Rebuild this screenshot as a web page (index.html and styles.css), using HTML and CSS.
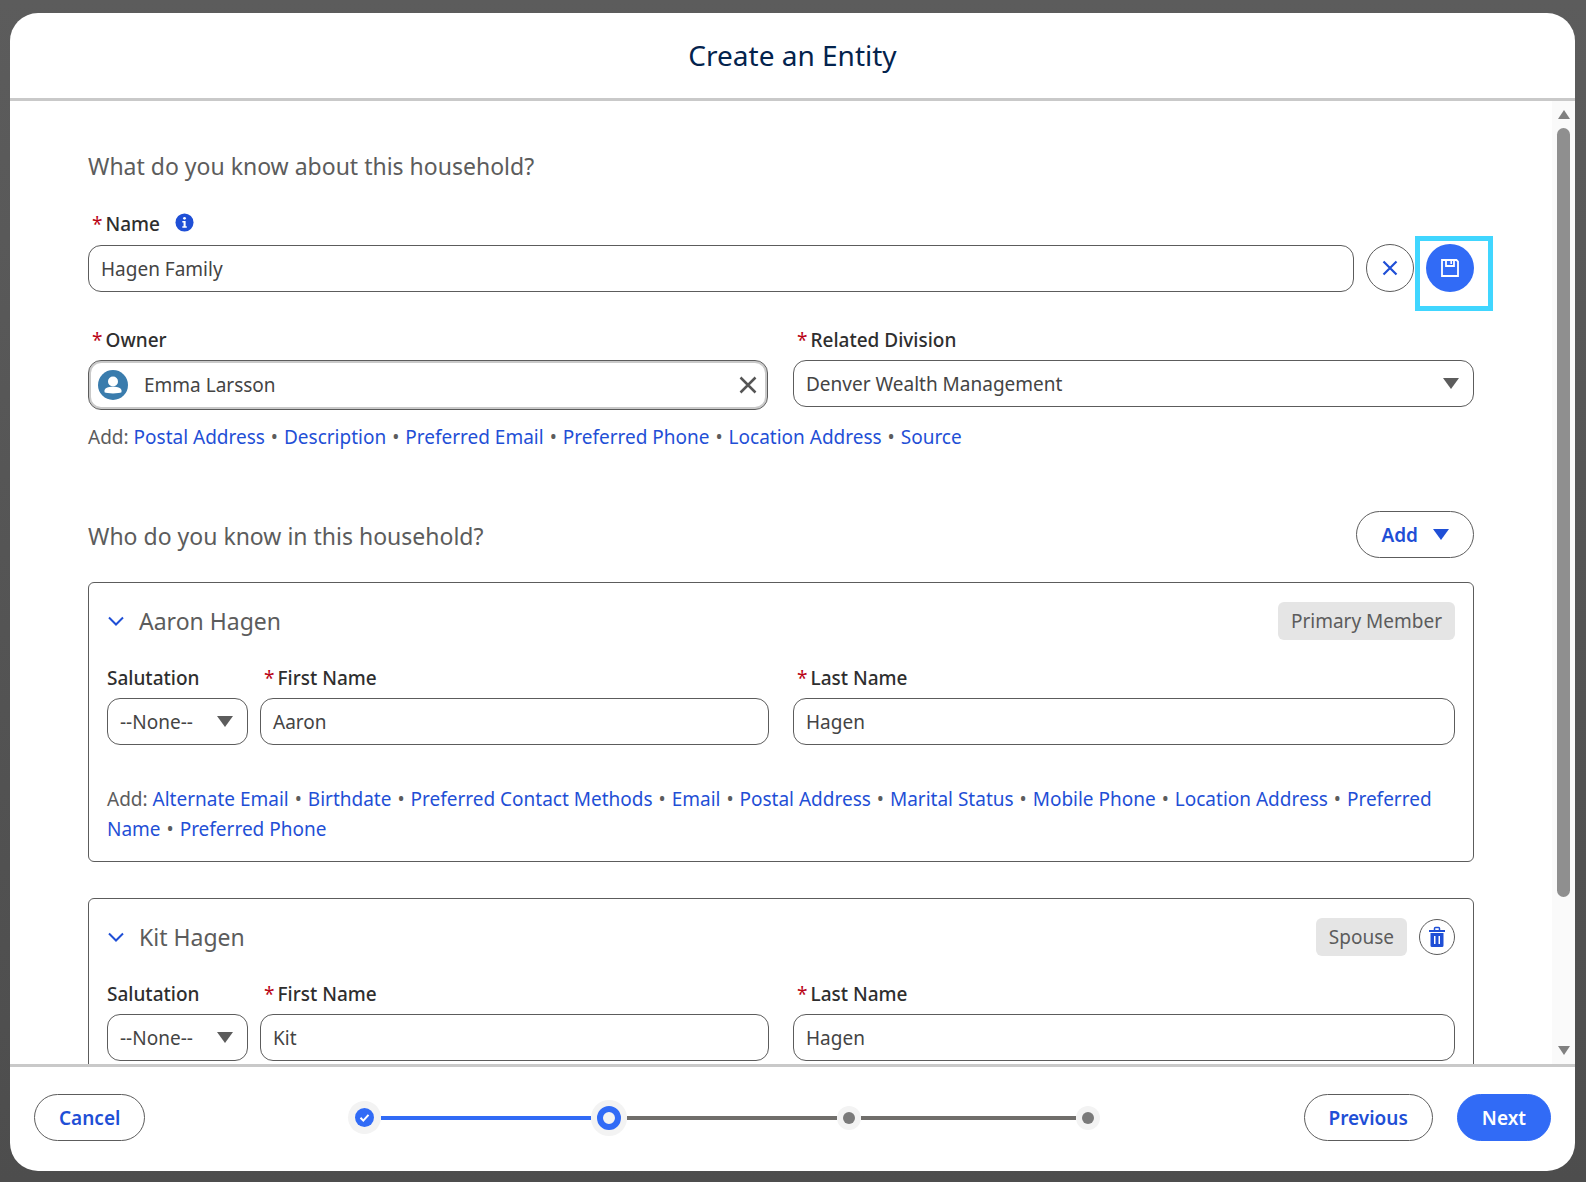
FILE: index.html
```html
<!DOCTYPE html>
<html lang="en">
<head>
  <meta charset="UTF-8" />
  <meta name="viewport" content="width=device-width, initial-scale=1" />
  <title>Create an Entity</title>
  <link rel="stylesheet" href="styles.css">
</head>
<body>
  <div class="modal">
    <header class="modal-header">
      <h1>Create an Entity</h1>
    </header>

    <div class="modal-middle">
      <main class="modal-body">
        <h2 class="section-title">What do you know about this household?</h2>

        <div class="label name-label">
          <span class="req">*</span>Name
          <svg class="info-icon" viewBox="0 0 20 20"><circle cx="10" cy="10" r="9.5" fill="#1f4fd6"/><circle cx="10" cy="5.6" r="1.5" fill="#fff"/><path d="M7.7 8.4h3.5v5.6h1.2v1.6H7.7V14h1.3v-4H7.7z" fill="#fff"/></svg>
        </div>
        <div class="name-row">
          <div class="input">Hagen Family</div>
          <button class="icon-btn">
            <svg width="18" height="18" viewBox="0 0 18 18"><path d="M2.5 2.5l13 13M15.500 2.500l-13 13" stroke="#1f4fd6" stroke-width="2.200" fill="none"/></svg>
          </button>
          <button class="icon-btn icon-btn-solid">
            <svg width="20" height="20" viewBox="0 0 20 20" fill="none" stroke="#fff" stroke-width="1.800"><path d="M2 2h14.500L18 3.500V18H2z"/><path d="M6 2v6h8V2"/><path d="M11.200 3v3" stroke-width="1.600"/></svg>
          </button>
        </div>

        <div class="two-col">
          <div>
            <div class="label"><span class="req">*</span>Owner</div>
            <div class="input owner-input">
              <svg class="avatar" viewBox="0 0 30 30"><circle cx="15" cy="15" r="15" fill="#3a7cad"/><circle cx="15" cy="11.500" r="5" fill="#fff"/><path d="M6.500 20.500c0-2.500 3.500-3.800 8.500-3.800s8.500 1.300 8.500 3.800v1.800c-2 1.500-15 1.500-17 0z" fill="#fff"/></svg>
              <span class="owner-name">Emma Larsson</span>
              <svg class="clear-icon" width="18" height="18" viewBox="0 0 18 18"><path d="M1.500 1.500l15 15M16.500 1.500l-15 15" stroke="#555" stroke-width="2.500" fill="none"/></svg>
            </div>
          </div>
          <div>
            <div class="label"><span class="req">*</span>Related Division</div>
            <div class="input select">Denver Wealth Management<i class="caret"></i></div>
          </div>
        </div>

        <p class="add-row">Add: <a>Postal Address</a> <b>•</b> <a>Description</a> <b>•</b> <a>Preferred Email</a> <b>•</b> <a>Preferred Phone</a> <b>•</b> <a>Location Address</a> <b>•</b> <a>Source</a></p>

        <div class="members-head">
          <h2 class="section-title">Who do you know in this household?</h2>
          <button class="btn add-btn">Add<i class="caret caret-blue"></i></button>
        </div>

        <section class="card">
          <div class="card-head">
            <svg class="chevron" width="16" height="10" viewBox="0 0 16 10"><path d="M1 1.500l7 7 7-7" stroke="#1f4fd6" stroke-width="2" fill="none"/></svg>
            <span class="member-name">Aaron Hagen</span>
            <span class="badge">Primary Member</span>
          </div>
          <div class="member-fields">
            <div>
              <div class="label">Salutation</div>
              <div class="input select">--None--<i class="caret"></i></div>
            </div>
            <div>
              <div class="label"><span class="req">*</span>First Name</div>
              <div class="input">Aaron</div>
            </div>
            <div>
              <div class="label"><span class="req">*</span>Last Name</div>
              <div class="input">Hagen</div>
            </div>
          </div>
          <p class="add-row card-add">Add: <a>Alternate Email</a> <b>•</b> <a>Birthdate</a> <b>•</b> <a>Preferred Contact Methods</a> <b>•</b> <a>Email</a> <b>•</b> <a>Postal Address</a> <b>•</b> <a>Marital Status</a> <b>•</b> <a>Mobile Phone</a> <b>•</b> <a>Location Address</a> <b>•</b> <a>Preferred Name</a> <b>•</b> <a>Preferred Phone</a></p>
        </section>

        <section class="card">
          <div class="card-head">
            <svg class="chevron" width="16" height="10" viewBox="0 0 16 10"><path d="M1 1.500l7 7 7-7" stroke="#1f4fd6" stroke-width="2" fill="none"/></svg>
            <span class="member-name">Kit Hagen</span>
            <span class="badge">Spouse</span>
            <button class="trash-btn">
              <svg width="18" height="22" viewBox="0 0 18 22"><path d="M1 5h16" stroke="#1f4fd6" stroke-width="2"/><path d="M6.500 4.500V2.500a1 1 0 0 1 1-1h3a1 1 0 0 1 1 1v2" stroke="#1f4fd6" stroke-width="1.500" fill="none"/><path fill-rule="evenodd" d="M2.500 7h13v12.500a1.500 1.500 0 0 1-1.500 1.500H4a1.500 1.500 0 0 1-1.500-1.500zM6 10v8h1.500v-8zM10.500 10v8H12v-8z" fill="#1f4fd6"/></svg>
            </button>
          </div>
          <div class="member-fields">
            <div>
              <div class="label">Salutation</div>
              <div class="input select">--None--<i class="caret"></i></div>
            </div>
            <div>
              <div class="label"><span class="req">*</span>First Name</div>
              <div class="input">Kit</div>
            </div>
            <div>
              <div class="label"><span class="req">*</span>Last Name</div>
              <div class="input">Hagen</div>
            </div>
          </div>
        </section>
      </main>

      <div class="scrollbar">
        <i class="arrow-up"></i>
        <div class="thumb"></div>
        <i class="arrow-down"></i>
      </div>
    </div>

    <footer class="modal-footer">
      <button class="btn">Cancel</button>
      <div class="stepper">
        <span class="step step-done">
          <svg width="19" height="19" viewBox="0 0 19 19"><circle cx="9.500" cy="9.500" r="9.500" fill="#316bf6"/><path d="M5.500 9.800l2.800 2.800 5.200-5.800" stroke="#fff" stroke-width="2" fill="none"/></svg>
        </span>
        <span class="step-line line-done"></span>
        <span class="step step-current"><i></i></span>
        <span class="step-line"></span>
        <span class="step"><i></i></span>
        <span class="step-line line-last"></span>
        <span class="step"><i></i></span>
      </div>
      <div class="footer-right">
        <button class="btn">Previous</button>
        <button class="btn btn-primary">Next</button>
      </div>
    </footer>
  </div>
</body>
</html>
```

FILE: styles.css
```css
* {
  box-sizing: border-box;
}

body {
  margin: 0;
  height: 1182px;
  padding: 13px 11px 11px 10px;
  background: linear-gradient(to bottom, #5c5c5c, #4d4d4d);
  font-family: "Noto Sans", "Open Sans", sans-serif;
  font-size: 19px;
  color: #444;
  overflow: hidden;
}

.modal {
  height: 100%;
  background: #fff;
  border-radius: 28px;
  display: flex;
  flex-direction: column;
  overflow: hidden;
}

.modal-header {
  height: 88px;
  flex: none;
  border-bottom: 3px solid #c9c9c9;
  display: flex;
  align-items: center;
  justify-content: center;
  padding-bottom: 1px;
}

h1 {
  margin: 0;
  font-size: 28px;
  font-weight: 400;
  color: #03234d;
}

.modal-middle {
  flex: 1;
  display: flex;
  min-height: 0;
}

.modal-body {
  flex: 1;
  padding: 48px 78px 0;
  overflow: hidden;
}

.scrollbar {
  width: 23px;
  flex: none;
  background: #fafafa;
  display: flex;
  flex-direction: column;
  align-items: center;
  padding: 9px 0;
}

.thumb {
  width: 13px;
  height: 769px;
  margin-top: 9px;
  border-radius: 7px;
  background: #8f8f8f;
}

.arrow-up,
.arrow-down {
  width: 0;
  height: 0;
  border-left: 6px solid transparent;
  border-right: 6px solid transparent;
}

.arrow-up {
  border-bottom: 9px solid #808080;
}

.arrow-down {
  border-top: 9px solid #808080;
  margin-top: auto;
}

.section-title {
  margin: 0;
  font-size: 23px;
  line-height: 34px;
  font-weight: 400;
  color: #5c5c5c;
}

.label {
  height: 28px;
  line-height: 28px;
  margin-bottom: 6px;
  font-weight: 500;
  color: #2e2e2e;
  white-space: nowrap;
}

.name-label {
  margin-top: 27px;
  display: flex;
  align-items: center;
}

.req {
  color: #ba0517;
  margin: 0 3px 0 4px;
  font-weight: 400;
}

.info-icon {
  width: 19px;
  height: 19px;
  margin: -4px 0 0 15px;
}

.input {
  height: 47px;
  border: 1px solid #5c5c5c;
  border-radius: 13px;
  padding: 0 12px;
  display: flex;
  align-items: center;
  background: #fff;
  color: #444;
}

.name-row {
  display: flex;
  align-items: flex-end;
  gap: 12px;
  height: 48px;
}

.name-row .input {
  flex: 1;
}

.icon-btn {
  width: 48px;
  height: 48px;
  border-radius: 50%;
  border: 1px solid #5c5c5c;
  background: #fff;
  padding: 0;
  display: flex;
  align-items: center;
  justify-content: center;
  position: relative;
}

.icon-btn-solid {
  background: #316bf6;
  border: none;
}

/* focus ring around the save button */
.icon-btn-solid::after {
  content: "";
  position: absolute;
  left: -11px;
  top: -8px;
  width: 68px;
  height: 65px;
  border: 5px solid #40d6ff;
}

.two-col {
  display: grid;
  grid-template-columns: 680px 681px;
  gap: 25px;
  align-items: start;
  margin-top: 34px;
}

.owner-input {
  height: 50px;
  box-shadow: inset 0 0 0 2px #c9c9c9;
  padding: 0 10px 0 9px;
}

.avatar {
  width: 30px;
  height: 30px;
  flex: none;
}

.owner-name {
  margin-left: 16px;
  flex: 1;
}

.select {
  justify-content: space-between;
}

.caret {
  width: 0;
  height: 0;
  border-left: 8px solid transparent;
  border-right: 8px solid transparent;
  border-top: 11px solid #5c5c5c;
  margin-right: 2px;
}

.caret-blue {
  border-top-color: #1f4fd6;
  margin: 0 0 0 15px;
}

.add-row {
  margin: 12px 0 0;
  line-height: 30px;
  color: #5c5c5c;
}

.add-row a {
  color: #1f4fd6;
}

.add-row b {
  font-weight: 400;
  margin: 0 1px;
}

.members-head {
  display: flex;
  justify-content: space-between;
  align-items: center;
  margin-top: 59px;
  height: 47px;
}

.members-head .section-title {
  margin-top: 3px;
}

.btn {
  height: 47px;
  border: 1px solid #5c5c5c;
  border-radius: 24px;
  background: #fff;
  font-family: inherit;
  font-size: 19px;
  font-weight: 600;
  color: #1f4fd6;
  padding: 0 24px;
  display: flex;
  align-items: center;
}

.btn-primary {
  background: #316bf6;
  border-color: #316bf6;
  color: #fff;
}

.card {
  border: 1px solid #5c5c5c;
  border-radius: 6px;
  padding: 19px 18px 17px;
  margin: 24px 0 36px;
}

.card + .card {
  margin-top: 0;
}

.card-head {
  display: flex;
  align-items: center;
  height: 38px;
}

.chevron {
  margin-left: 1px;
}

.member-name {
  font-size: 23px;
  color: #5c5c5c;
  margin-left: 15px;
  flex: 1;
}

.badge {
  height: 38px;
  line-height: 38px;
  padding: 0 13px;
  border-radius: 6px;
  background: #e5e5e5;
  color: #5c5c5c;
}

.trash-btn {
  width: 36px;
  height: 36px;
  margin-left: 12px;
  border: 1px solid #5c5c5c;
  border-radius: 50%;
  background: #fff;
  padding: 0;
  display: flex;
  align-items: center;
  justify-content: center;
}

.member-fields {
  display: grid;
  grid-template-columns: 141px 509px 662px;
  column-gap: 12px;
  margin-top: 24px;
}

.member-fields > div:last-child {
  margin-left: 12px;
  margin-right: -12px;
}

.card-add {
  margin-top: 39px;
}

.modal-footer {
  height: 107px;
  flex: none;
  border-top: 3px solid #c9c9c9;
  display: flex;
  justify-content: space-between;
  align-items: flex-start;
  padding: 27px 24px 0;
}

.footer-right {
  display: flex;
  gap: 24px;
}

.stepper {
  display: flex;
  align-items: center;
  height: 47px;
}

.step {
  width: 24px;
  height: 24px;
  flex: none;
  border-radius: 50%;
  background: #f3f3f3;
  display: flex;
  align-items: center;
  justify-content: center;
}

.step i {
  width: 12px;
  height: 12px;
  border-radius: 50%;
  background: #7a7a7a;
}

.step-done {
  width: 33px;
  height: 33px;
}

.step-current {
  width: 36px;
  height: 36px;
}

.step-current i {
  width: 24px;
  height: 24px;
  background: #f3f3f3;
  border: 6px solid #316bf6;
}

.step-line {
  width: 210px;
  height: 4px;
  background: #706e6b;
}

.line-done {
  background: #316bf6;
}

.line-last {
  width: 215px;
}
```
